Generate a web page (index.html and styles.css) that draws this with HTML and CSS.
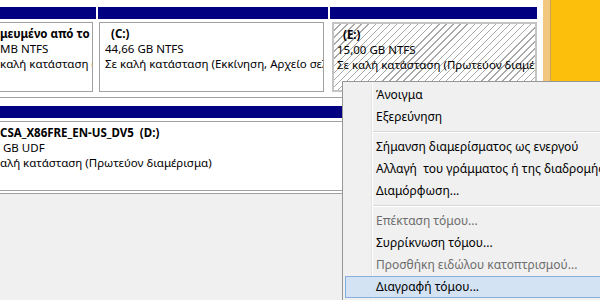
FILE: index.html
```html
<!DOCTYPE html>
<html lang="el">
<head>
  <meta charset="UTF-8" />
  <title>Διαχείριση δίσκων</title>
  <link rel="stylesheet" href="styles.css">
</head>
<body>
  <div class="screen">
    <div class="console">
      <div class="disk disk-first">
        <div class="part part-sys">
          <div class="bar"></div>
          <div class="box">
            <div class="line name">μευμένο από το σύστημα</div>
            <div class="line">MB NTFS</div>
            <div class="line">καλή κατάσταση (Σύστημα, Ενεργό, Πρωτεύον διαμέρισμα)</div>
          </div>
        </div>
        <div class="part part-c">
          <div class="bar"></div>
          <div class="box">
            <div class="line name indent">(C:)</div>
            <div class="line">44,66 GB NTFS</div>
            <div class="line">Σε καλή κατάσταση (Εκκίνηση, Αρχείο σελιδοποίησης, Πρωτεύον διαμέρισμα)</div>
          </div>
        </div>
        <div class="part part-e">
          <div class="bar"></div>
          <div class="box hatched">
            <div class="line name indent">(E:)</div>
            <div class="line">15,00 GB NTFS</div>
            <div class="line">Σε καλή κατάσταση (Πρωτεύον διαμέρισμα)</div>
          </div>
        </div>
      </div>

      <div class="disk disk-cd">
        <div class="part part-d">
          <div class="bar"></div>
          <div class="box">
            <div class="line name">CSA_X86FRE_EN-US_DV5  (D:)</div>
            <div class="line"> GB UDF</div>
            <div class="line">αλή κατάσταση (Πρωτεύον διαμέρισμα)</div>
          </div>
        </div>
      </div>
    </div>
    <div class="frame"></div>
    <div class="desktop"></div>

    <div class="menu">
      <div class="item">Άνοιγμα</div>
      <div class="item">Εξερεύνηση</div>
      <div class="sep"></div>
      <div class="item">Σήμανση διαμερίσματος ως ενεργού</div>
      <div class="item">Αλλαγή  του γράμματος ή της διαδρομής μονάδας δίσκου...</div>
      <div class="item">Διαμόρφωση...</div>
      <div class="sep"></div>
      <div class="item disabled">Επέκταση τόμου...</div>
      <div class="item">Συρρίκνωση τόμου...</div>
      <div class="item disabled">Προσθήκη ειδώλου κατοπτρισμού...</div>
      <div class="item active">Διαγραφή τόμου...</div>
    </div>
  </div>
</body>
</html>
```

FILE: styles.css
```css
body {
  margin: 0;
  font-family: "Noto Sans", "DejaVu Sans", sans-serif;
  font-size: 12px;
  color: #000;
  background: #f0f0f0;
  overflow: hidden;
}

.screen {
  position: relative;
  display: flex;
  width: 600px;
  height: 300px;
  overflow: hidden;
}

.console {
  width: 543px;
  background: #f0f0f0;
}

.frame {
  width: 7px;
  background: #f1c87e;
  border-right: 1px solid #c8a258;
}

.desktop {
  flex: 1;
  background: #fcbf0c;
}

/* rangées de disques */
.disk {
  display: flex;
  gap: 2px;
  background: #fff;
  padding: 7px 0 5px;
  border-bottom: 1px solid #a0a0a0;
}

.disk-cd {
  padding: 8px 0 2px;
}

.part {
  display: flex;
  flex-direction: column;
  background: #fff;
}

.bar {
  height: 12px;
  background: #000080;
}

.box {
  box-sizing: border-box;
  height: 70px;
  margin-top: 3px;
  padding: 3px 4px 0 5px;
  border: 1px solid #a0a0a0;
  background: #fff;
  font-size: 11.5px;
  overflow: hidden;
}

.line {
  line-height: 15px;
  white-space: pre;
}

.name {
  font-weight: bold;
}

.indent {
  padding-left: 6px;
}

.part-sys {
  width: 96px;
}

.part-sys .box {
  margin-right: 3px;
  padding-left: 0;
  border-left: none;
}

.part-c {
  width: 230px;
}

.part-c .box {
  margin: 3px 4px 0 1px;
}

.part-e {
  width: 207px;
}

.part-e .box {
  margin: 3px 0 0 2px;
  padding-left: 3px;
  border: 2px solid #c4c4c4;
}

.hatched {
  background: repeating-linear-gradient(135deg, #fff 0 4px, #a9a9a9 4px 5px);
}

.part-d {
  flex: 1;
}

.part-d .box {
  padding-left: 0;
  border-left: none;
}

/* menu contextuel */
.menu {
  position: absolute;
  left: 342px;
  top: 81px;
  width: 300px;
  height: 240px;
  padding: 2px 0 0 2px;
  border: 1px solid #979797;
  background: linear-gradient(to right, #f0f0f0 28px, #e2e3e3 28px 29px, #fff 29px 30px, #f0f0f0 30px);
}

.item {
  box-sizing: border-box;
  height: 22px;
  line-height: 20px;
  padding-left: 30px;
  border: 1px solid transparent;
  white-space: pre;
}

.item.disabled {
  color: #6d6d6d;
}

.item.active {
  background: #d3e3f4;
  border-color: #86addd;
}

.sep {
  height: 1px;
  margin: 3px 0 3px 28px;
  background: #d7d7d7;
  border-bottom: 1px solid #fff;
}
```
